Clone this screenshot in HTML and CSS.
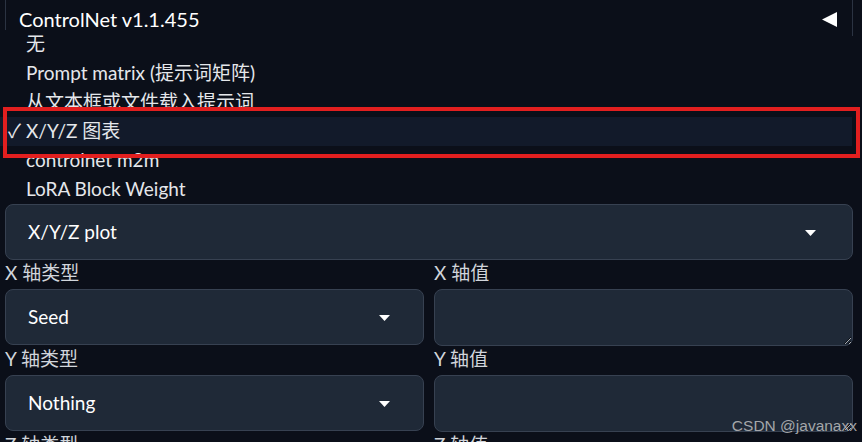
FILE: index.html
```html
<!DOCTYPE html>
<html>
<head>
    <title>ControlNet - X/Y/Z plot</title>
    <meta name="viewport" content="width=device-width, initial-scale=1">
    <link rel="stylesheet" href="styles.css">
</head>
<body>
    <div class="page">
        <div class="accordion-header">
            <span class="accordion-title">ControlNet v1.1.455</span>
            <svg class="accordion-icon" width="15" height="15" viewBox="0 0 15 15">
                <polygon points="15,0 15,15 0,7.5" fill="#ffffff"/>
            </svg>
        </div>

        <div class="script-field">
            <div class="field-label">脚本</div>
            <div class="select-box">
                <span>X/Y/Z plot</span>
                <svg class="select-arrow" width="11" height="6" viewBox="0 0 11 6"><polygon points="0,0 11,0 5.5,6" fill="#ffffff"/></svg>
            </div>
        </div>

        <div class="field-grid">
            <div class="field">
                <div class="field-label">X 轴类型</div>
                <div class="select-box select-small">
                    <span>Seed</span>
                    <svg class="select-arrow" width="11" height="6" viewBox="0 0 11 6"><polygon points="0,0 11,0 5.5,6" fill="#ffffff"/></svg>
                </div>
            </div>
            <div class="field">
                <div class="field-label">X 轴值</div>
                <textarea class="value-box"></textarea>
            </div>
            <div class="field">
                <div class="field-label">Y 轴类型</div>
                <div class="select-box select-small">
                    <span>Nothing</span>
                    <svg class="select-arrow" width="11" height="6" viewBox="0 0 11 6"><polygon points="0,0 11,0 5.5,6" fill="#ffffff"/></svg>
                </div>
            </div>
            <div class="field">
                <div class="field-label">Y 轴值</div>
                <textarea class="value-box"></textarea>
            </div>
            <div class="field">
                <div class="field-label">Z 轴类型</div>
            </div>
            <div class="field">
                <div class="field-label">Z 轴值</div>
            </div>
        </div>

        <!-- open dropdown of the script select -->
        <ul class="dropdown-menu">
            <li><span class="check"></span>无</li>
            <li><span class="check"></span>Prompt matrix (提示词矩阵)</li>
            <li><span class="check"></span>从文本框或文件载入提示词</li>
            <li class="selected"><span class="check">✓</span>X/Y/Z 图表</li>
            <li><span class="check"></span>controlnet m2m</li>
            <li><span class="check"></span>LoRA Block Weight</li>
        </ul>
        <div class="highlight-box"></div>
    </div>
    <div class="watermark">CSDN @javanaxx</div>
</body>
</html>
```

FILE: styles.css
```css
html, body {
    height: 100%;
    overflow: hidden;
}
body {
    margin: 0;
    background-color: #0b0f19;
    color: #e5e7eb;
    font-family: Lato, "Noto Sans CJK SC", sans-serif;
}
.page {
    position: relative;
    padding: 0 9px 0 5px;
}
.accordion-header {
    height: 36px;
    display: flex;
    align-items: center;
    justify-content: space-between;
    padding: 0 15px 0 13px;
    border-left: 1px solid #2b3342;
    border-right: 1px solid #2b3342;
    box-sizing: border-box;
}
.accordion-title {
    color: #ffffff;
    font-size: 20px;
    line-height: 24px;
    margin-top: 2px;
}
.accordion-icon {
    display: block;
    margin-top: 2px;
}
.script-field {
    margin-top: 139px;
}
.field-label {
    font-size: 19px;
    line-height: 24px;
    padding-top: 1px;
    margin-bottom: 4px;
    color: #d1d5db;
}
.select-box {
    height: 56px;
    box-sizing: border-box;
    display: flex;
    align-items: center;
    justify-content: space-between;
    padding: 0 36px 0 22px;
    background-color: #1f2937;
    border: 1px solid #374151;
    border-radius: 8px;
    font-size: 19px;
    color: #ffffff;
}
.select-box span {
    margin-top: -1px;
}
.select-small {
    padding-right: 33px;
}
.select-arrow {
    display: block;
    margin-top: 1px;
}
.field-grid {
    display: grid;
    grid-template-columns: 1fr 1fr;
    column-gap: 10px;
}
.value-box {
    display: block;
    width: 100%;
    height: 57px;
    box-sizing: border-box;
    background-color: #1f2937;
    border: 1px solid #374151;
    border-radius: 8px;
    resize: vertical;
    color: #ffffff;
    font-family: inherit;
    font-size: 19px;
}
.dropdown-menu {
    position: absolute;
    top: 30px;
    left: 0;
    width: 852px;
    margin: 0;
    padding: 0;
    list-style: none;
    background-color: #0b0f19;
}
.dropdown-menu li {
    height: 29px;
    line-height: 27px;
    padding-left: 8px;
    font-size: 19px;
    color: #e5e7eb;
    white-space: nowrap;
}
.dropdown-menu li.selected {
    background-color: #121a2a;
}
.check {
    display: inline-block;
    width: 18px;
}
.highlight-box {
    position: absolute;
    top: 107px;
    left: 3px;
    width: 857px;
    height: 51px;
    box-sizing: border-box;
    border: 4px solid #e21f1f;
}
.watermark {
    position: absolute;
    right: 5px;
    top: 417px;
    font-family: "Liberation Sans", Arial, sans-serif;
    font-size: 15.5px;
    color: rgba(210, 210, 210, 0.75);
}
```
